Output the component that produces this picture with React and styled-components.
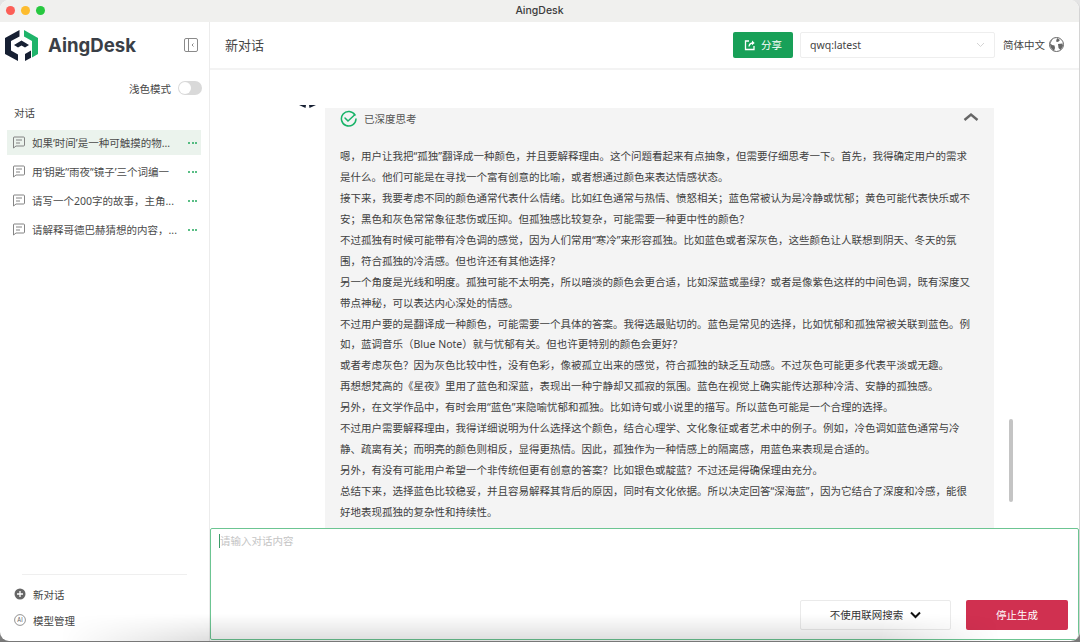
import React from "react";
import styled, { createGlobalStyle } from "styled-components";

const Global = createGlobalStyle`
  html, body { margin: 0; padding: 0; width: 1080px; height: 642px; overflow: hidden; }
  body { background: linear-gradient(#e4e4e4 0, #e4e4e4 90%, #777 100%); font-family: "Noto Sans", "Noto Sans CJK SC", sans-serif; }
  * { box-sizing: border-box; }
  svg { display: block; flex: none; }
`;

const Win = styled.div`
  width: 1080px; height: 641px; background: #fff; border-radius: 9px; overflow: hidden; position: relative;
  display: flex; flex-direction: column; border-right: 1px solid #d4d4d4;
`;
const BottomShade = styled.div`
  position: absolute; left: 0; right: 0; bottom: 0; height: 27px; pointer-events: none;
  background: linear-gradient(rgba(0,0,0,0), rgba(0,0,0,.13));
  -webkit-mask-image: linear-gradient(90deg, transparent 60px, #000 210px, #000 880px, transparent 1000px);
  mask-image: linear-gradient(90deg, transparent 60px, #000 210px, #000 880px, transparent 1000px);
`;
const TitleBar = styled.div`
  height: 22px; flex: none; background: #f0f0ee; display: flex; align-items: center; position: relative; padding: 0 0 2px 6px; gap: 6px;
`;
const Light = styled.span`
  width: 9px; height: 9px; border-radius: 50%; background: ${p => p.$c};
`;
const TitleText = styled.div`
  position: absolute; left: 0; right: 0; text-align: center; font-size: 10.5px; font-weight: 500; color: #3c3c3c;
  font-family: "Inter", sans-serif;
`;
const Body = styled.div`
  flex: 1; display: flex; min-height: 0;
`;
const Side = styled.aside`
  width: 210px; flex: none; border-right: 1px solid #ececec; display: flex; flex-direction: column;
`;
const Brand = styled.div`
  height: 46px; display: flex; align-items: center; padding: 0 11px 0 4px;
`;
const BrandName = styled.div`
  font-family: "Inter", sans-serif; font-weight: 700; font-size: 18.6px; color: #3a3f47; margin-left: 9px; flex: 1;
`;
const ModeRow = styled.div`
  display: flex; justify-content: flex-end; align-items: center; gap: 7px; padding: 0 7px 0 0; height: 30px; margin-top: 5px; font-size: 10.5px; color: #444;
`;
const Toggle = styled.span`
  width: 24px; height: 14px; border-radius: 7px; background: #d9d9d9; position: relative; display: block;
  &::after { content: ""; position: absolute; left: 1px; top: 1px; width: 12px; height: 12px; border-radius: 50%; background: #fff; }
`;
const SectionTitle = styled.div`
  font-size: 10.5px; line-height: 16px; color: #444; padding: 2px 0 0 14px; height: 27px;
`;
const List = styled.div`
  display: flex; flex-direction: column; gap: 4px; padding: 0 8px 0 7px; flex: 1;
`;
const Item = styled.div`
  height: 25px; display: flex; align-items: center; padding: 0 4px 0 5px; background: ${p => p.$active ? "#ebf3ed" : "transparent"}; color: #4a4a4a; font-size: 10.5px;
`;
const ItemText = styled.span`
  flex: 1; min-width: 0; margin-left: 7px; white-space: nowrap;
`;
const Dots = styled.span`
  display: flex; gap: 1.5px; margin-left: 5px;
  i { width: 2px; height: 2px; background: #22a95c; border-radius: 50%; display: block; }
`;
const Rule = styled.div`
  height: 1.5px; background: #efefef; margin: 0 22px;
`;
const Foot = styled.div`
  padding: 0 0 12px 14px; display: flex; flex-direction: column; gap: 8px; margin-top: 10px;
`;
const FootItem = styled.div`
  display: flex; align-items: center; gap: 7px; height: 18px; font-size: 10.5px; color: #444;
`;
const Main = styled.main`
  flex: 1; min-width: 0; display: flex; flex-direction: column;
`;
const Header = styled.header`
  height: 48px; flex: none; border-bottom: 2px solid #f3f3f3; display: flex; align-items: center; padding: 0 15px 1px 15px;
`;
const PageTitle = styled.div`
  font-size: 13px; color: #444; flex: 1;
`;
const ShareBtn = styled.div`
  width: 60px; height: 26px; background: #18a058; border-radius: 2px; color: #fff; font-size: 10.5px; display: flex; align-items: center; justify-content: center; gap: 5px;
`;
const Select = styled.div`
  width: 195px; height: 26px; margin-left: 7px; border: 1px solid #eee; border-radius: 2px; display: flex; align-items: center; justify-content: space-between; padding: 0 9px;
  font-size: 10.5px; color: #444;
`;
const Lang = styled.div`
  display: flex; align-items: center; gap: 4px; margin-left: 8px; font-size: 10.5px; color: #444;
`;
const Chat = styled.div`
  flex: 1; min-height: 0; position: relative; overflow: hidden; padding: 38px 0 0 115px;
`;
const Avatar = styled.div`
  position: absolute; left: 89px; top: 35px;
`;
const Panel = styled.div`
  width: 669px; height: 100%; background: #f4f4f4; padding: 0 0 0 15px; position: relative;
`;
const ThinkHead = styled.div`
  display: flex; align-items: center; gap: 7px; height: 21px; font-size: 10.5px; color: #555;
`;
const Caret = styled.div`
  position: absolute; right: 15px; top: 4px;
`;
const Lines = styled.div`
  margin-top: 17px; font-size: 10.5px; line-height: 20.94px; color: #3f3f3f;
`;
const Line = styled.div`
  white-space: nowrap;
`;
const Scrollbar = styled.div`
  position: absolute; right: 66px; top: 349px; width: 4px; height: 83px; border-radius: 2px; background: #c4c4c4;
`;
const Composer = styled.div`
  height: 112px; flex: none; border: 1.5px solid #6cc592; border-radius: 2px; position: relative; padding: 5px 8px;
  margin-bottom: 1px;
`;
const Placeholder = styled.div`
  font-size: 10.5px; color: #c4c4c4; line-height: 14px; border-left: 1px solid #3d9b69; height: 14px; display: flex; align-items: center;
  width: max-content;
`;
const Actions = styled.div`
  position: absolute; right: 10px; bottom: 9.5px; display: flex; gap: 15px;
`;
const SearchBtn = styled.div`
  width: 151px; height: 30px; border: 1px solid #eaeaea; border-radius: 2px; background: #fff; display: flex; align-items: center; justify-content: center; gap: 7px; font-size: 10.5px; color: #333;
`;
const StopBtn = styled.div`
  width: 102px; height: 30px; background: #d03050; border-radius: 2px; color: #fff; font-size: 10.5px; display: flex; align-items: center; justify-content: center;
`;

const Logo = () => (
  <svg width="35" height="33" viewBox="0 0 35 33">
    <path d="M20 1 L34 9 V25 L28 28.500 V12 L20 7.500 Z" fill="#1fb46a" />
    <path d="M15.500 1 L1 9 V25 L14 32 V25.500 L7 21.500 V12 L15.500 7.500 Z" fill="#172033" />
    <path d="M17.500 11.500 L25 16 L21 18.500 L17.500 16.500 L14 18.500 L10 16 Z" fill="#172033" />
    <path d="M21 32 L27 28.800 V21.500 L21 25 Z" fill="#172033" />
  </svg>
);
const Collapse = () => (
  <svg width="14" height="14" viewBox="0 0 14 14" fill="none" stroke="#8a8a8a" strokeWidth="1">
    <rect x="0.500" y="0.500" width="13" height="13" rx="1.500" />
    <path d="M4.500 1 V13" />
    <path d="M9.500 5.500 L8 7 L9.500 8.500" />
  </svg>
);
const ChatIcon = () => (
  <svg width="13" height="13" viewBox="0 0 13 13" fill="none" stroke="#777" strokeWidth="0.9">
    <path d="M2 1 H11.500 Q12.500 1 12.500 2 V9 Q12.500 10 11.500 10 H4 L1.500 12 V2 Q1.500 1 2 1 Z" />
    <path d="M4 4 H10 M4 7 H8" />
  </svg>
);
const PlusIcon = () => (
  <svg width="12" height="12" viewBox="0 0 12 12">
    <circle cx="6" cy="6" r="5.500" fill="#666" />
    <path d="M6 3 V9 M3 6 H9" stroke="#fff" strokeWidth="1.300" />
  </svg>
);
const AiIcon = () => (
  <svg width="12" height="12" viewBox="0 0 12 12">
    <circle cx="6" cy="6" r="5.400" fill="none" stroke="#666" strokeWidth="0.700" />
    <text x="6" y="8" fontSize="5.500" textAnchor="middle" fill="#555" fontFamily="Inter, sans-serif">AI</text>
  </svg>
);
const ShareIcon = () => (
  <svg width="12" height="12" viewBox="0 0 12 12" fill="none" stroke="#fff" strokeWidth="1.300">
    <path d="M5 2 H1.500 V10.500 H10 V7" />
    <path d="M5 7.500 Q5.500 4 9 4" />
    <path d="M8 1.500 L10.700 4 L8 6.200 Z" fill="#fff" stroke="none" />
  </svg>
);
const Chevron = () => (
  <svg width="9" height="6" viewBox="0 0 9 6" fill="none" stroke="#d4d4d4" strokeWidth="1">
    <path d="M1 1 L4.500 4.500 L8 1" />
  </svg>
);
const Globe = () => (
  <svg width="15" height="15" viewBox="0 0 15 15">
    <circle cx="7.500" cy="7.500" r="7" fill="#fff" stroke="#666" strokeWidth="1" />
    <path d="M4 1.500 Q2 3 1 6 L3 8 L5.500 8.500 L6 11 L5 14 L3 12 Q1 10 1 7 Z M8 1 L11 3 L9 5 L7 4.500 Z M9 7 L13.500 6.500 L14 9 L11.500 13 L9.500 11 Z" fill="#666" />
  </svg>
);
const Check = () => (
  <svg width="17" height="17" viewBox="0 0 17 17" fill="none" stroke="#18b368" strokeWidth="1.500" strokeLinecap="round">
    <path d="M15 5 A7.300 7.300 0 1 0 16 9" />
    <path d="M5 8 L8 11 L14.500 5" />
  </svg>
);
const Up = () => (
  <svg width="16" height="10" viewBox="0 0 16 10" fill="none" stroke="#666" strokeWidth="2.400">
    <path d="M1.500 8 L8 2.500 L14.500 8" />
  </svg>
);
const Down = () => (
  <svg width="11" height="8" viewBox="0 0 11 8" fill="none" stroke="#111" strokeWidth="2">
    <path d="M1 1.500 L5.500 6 L10 1.500" />
  </svg>
);
const AvatarMark = () => (
  <svg width="17" height="4" viewBox="0 0 17 4">
    <path d="M0 0 H7 L6.500 3 Z M10 0 H17 L10.500 3 Z" fill="#172033" />
  </svg>
);

// Chinese punctuation is full-width in this text.
const zh = s => s
  .replace(/,/g, "\uFF0C")
  .replace(/;/g, "\uFF1B")
  .replace(/\?/g, "\uFF1F")
  .replace(/\(/g, "\uFF08")
  .replace(/\)/g, "\uFF09");

const chats = ["如果‘时间’是一种可触摸的物...", "用‘钥匙’‘雨夜’‘镜子’三个词编一", "请写一个200字的故事,主角...", "请解释哥德巴赫猜想的内容,..."];
const lines = [
  "嗯,用户让我把“孤独”翻译成一种颜色,并且要解释理由。这个问题看起来有点抽象,但需要仔细思考一下。首先,我得确定用户的需求",
  "是什么。他们可能是在寻找一个富有创意的比喻,或者想通过颜色来表达情感状态。",
  "接下来,我要考虑不同的颜色通常代表什么情绪。比如红色通常与热情、愤怒相关;蓝色常被认为是冷静或忧郁;黄色可能代表快乐或不",
  "安;黑色和灰色常常象征悲伤或压抑。但孤独感比较复杂,可能需要一种更中性的颜色?",
  "不过孤独有时候可能带有冷色调的感觉,因为人们常用“寒冷”来形容孤独。比如蓝色或者深灰色,这些颜色让人联想到阴天、冬天的氛",
  "围,符合孤独的冷清感。但也许还有其他选择?",
  "另一个角度是光线和明度。孤独可能不太明亮,所以暗淡的颜色会更合适,比如深蓝或墨绿?或者是像紫色这样的中间色调,既有深度又",
  "带点神秘,可以表达内心深处的情感。",
  "不过用户要的是翻译成一种颜色,可能需要一个具体的答案。我得选最贴切的。蓝色是常见的选择,比如忧郁和孤独常被关联到蓝色。例",
  "如,蓝调音乐(Blue Note)就与忧郁有关。但也许更特别的颜色会更好?",
  "或者考虑灰色?因为灰色比较中性,没有色彩,像被孤立出来的感觉,符合孤独的缺乏互动感。不过灰色可能更多代表平淡或无趣。",
  "再想想梵高的《星夜》里用了蓝色和深蓝,表现出一种宁静却又孤寂的氛围。蓝色在视觉上确实能传达那种冷清、安静的孤独感。",
  "另外,在文学作品中,有时会用“蓝色”来隐喻忧郁和孤独。比如诗句或小说里的描写。所以蓝色可能是一个合理的选择。",
  "不过用户需要解释理由,我得详细说明为什么选择这个颜色,结合心理学、文化象征或者艺术中的例子。例如,冷色调如蓝色通常与冷",
  "静、疏离有关;而明亮的颜色则相反,显得更热情。因此,孤独作为一种情感上的隔离感,用蓝色来表现是合适的。",
  "另外,有没有可能用户希望一个非传统但更有创意的答案?比如银色或靛蓝?不过还是得确保理由充分。",
  "总结下来,选择蓝色比较稳妥,并且容易解释其背后的原因,同时有文化依据。所以决定回答“深海蓝”,因为它结合了深度和冷感,能很",
  "好地表现孤独的复杂性和持续性。",
];

export default function App() {
  return (
    <>
      <Global />
      <Win>
        <TitleBar>
          <Light $c="#fc5f57" /><Light $c="#fdbc2e" /><Light $c="#27c840" />
          <TitleText>AingDesk</TitleText>
        </TitleBar>
        <Body>
          <Side>
            <Brand><Logo /><BrandName>AingDesk</BrandName><Collapse /></Brand>
            <ModeRow>浅色模式<Toggle /></ModeRow>
            <SectionTitle>对话</SectionTitle>
            <List>
              {chats.map((c, i) => (
                <Item key={c} $active={i === 0}>
                  <ChatIcon /><ItemText>{zh(c)}</ItemText><Dots><i /><i /><i /></Dots>
                </Item>
              ))}
            </List>
            <Rule />
            <Foot>
              <FootItem><PlusIcon />新对话</FootItem>
              <FootItem><AiIcon />模型管理</FootItem>
            </Foot>
          </Side>
          <Main>
            <Header>
              <PageTitle>新对话</PageTitle>
              <ShareBtn><ShareIcon />分享</ShareBtn>
              <Select>qwq:latest<Chevron /></Select>
              <Lang>简体中文<Globe /></Lang>
            </Header>
            <Chat>
              <Avatar><AvatarMark /></Avatar>
              <Panel>
                <ThinkHead><Check />已深度思考</ThinkHead>
                <Caret><Up /></Caret>
                <Lines>{lines.map((l, i) => <Line key={i}>{zh(l)}</Line>)}</Lines>
              </Panel>
              <Scrollbar />
            </Chat>
            <Composer>
              <Placeholder>请输入对话内容</Placeholder>
              <Actions>
                <SearchBtn>不使用联网搜索<Down /></SearchBtn>
                <StopBtn>停止生成</StopBtn>
              </Actions>
            </Composer>
          </Main>
        </Body>
        <BottomShade />
      </Win>
    </>
  );
}
